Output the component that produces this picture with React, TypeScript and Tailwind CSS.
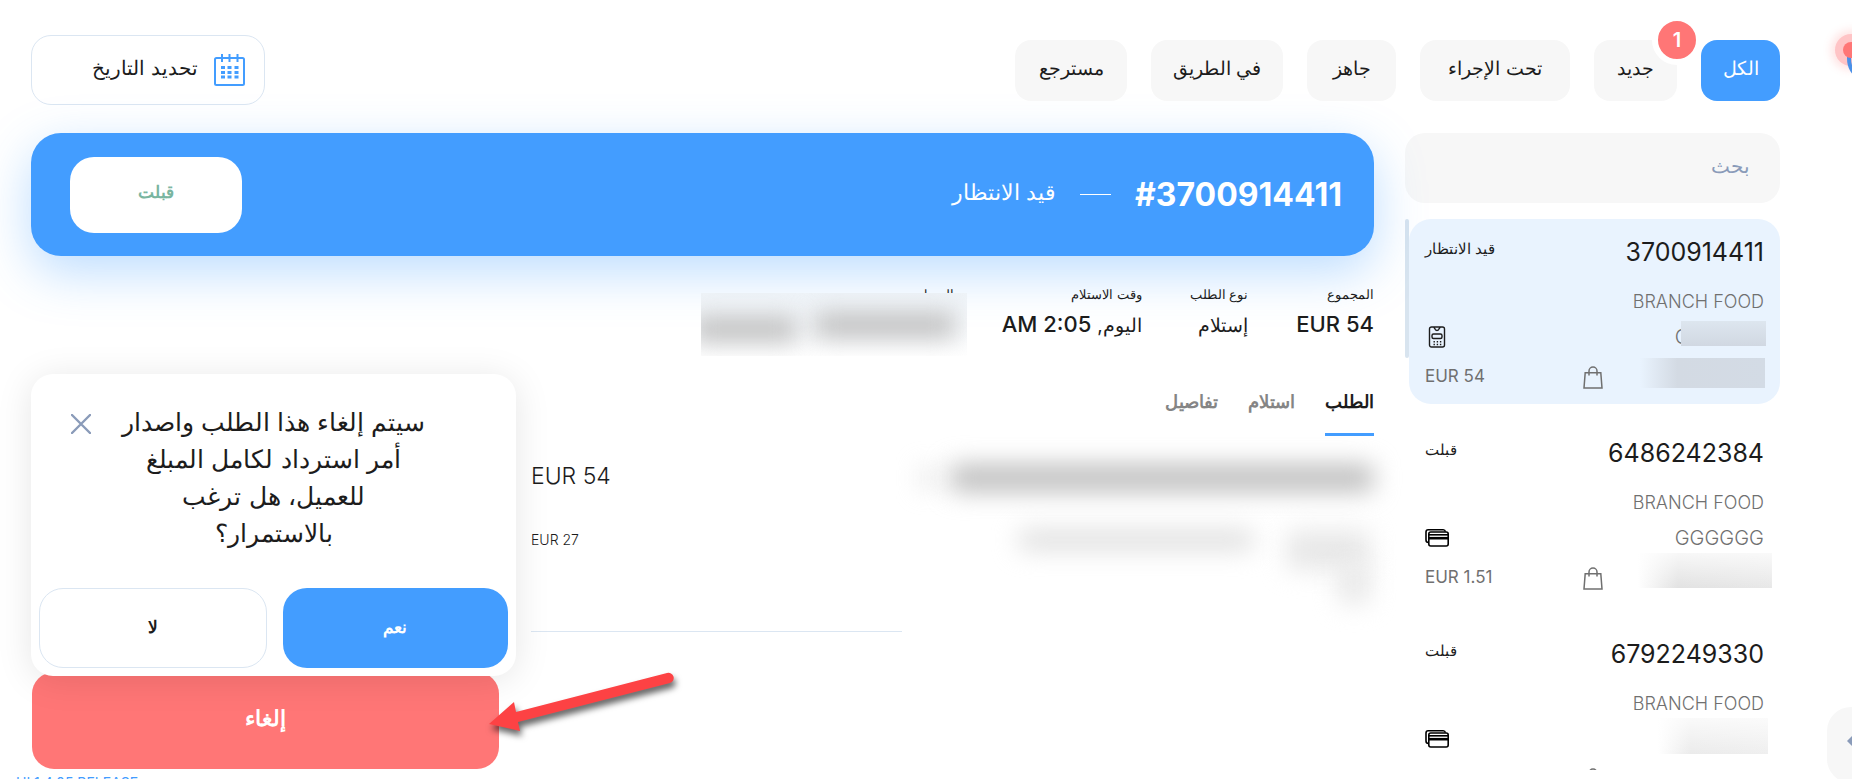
import { type ReactNode, useState } from "react";
import clsx from "clsx";

interface StatusTab {
  key: string;
  label: string;
  width: string;
  badge?: number;
}

interface Order {
  id: string;
  status: string;
  branch: string;
  customer?: string;
  total?: string;
  payment: "cash" | "card";
  masks: string[];
}

const statusTabs: StatusTab[] = [
  { key: "all", label: "الكل", width: "w-[79px]" },
  { key: "new", label: "جديد", width: "w-[83px]", badge: 1 },
  { key: "progress", label: "تحت الإجراء", width: "w-[150px]" },
  { key: "ready", label: "جاهز", width: "w-[89px]" },
  { key: "onway", label: "في الطريق", width: "w-[132px]" },
  { key: "returned", label: "مسترجع", width: "w-[112px]" },
];

const orders: Order[] = [
  {
    id: "3700914411",
    status: "قيد الانتظار",
    branch: "BRANCH FOOD",
    customer: "GGGGGG",
    total: "EUR 54",
    payment: "cash",
    masks: [
      "right-[14px] top-[102px] h-[25px] w-[85px] bg-linear-to-b from-[#dde6ef] to-[#d1d8e2]",
      "right-[15px] top-[139px] h-[30px] w-[125px] bg-linear-to-r from-[#e9f3fe] via-[#d3dae3] via-30% to-[#d3dbe5]",
    ],
  },
  {
    id: "6486242384",
    status: "قبلت",
    branch: "BRANCH FOOD",
    customer: "GGGGGG",
    total: "EUR 1.51",
    payment: "card",
    masks: [
      "right-2 top-[133px] h-[35px] w-[134px] bg-linear-to-r from-white via-[#e2e2e2] via-30% to-[#e8e8e8]",
      "right-2 top-[133px] h-[35px] w-[134px] bg-linear-to-b from-white/75 to-transparent",
    ],
  },
  {
    id: "6792249330",
    status: "قبلت",
    branch: "BRANCH FOOD",
    payment: "card",
    masks: [
      "right-3 top-[97px] h-9 w-[110px] bg-linear-to-r from-white via-[#ebebeb] via-30% to-[#efefef]",
      "right-3 top-[97px] h-9 w-[110px] bg-linear-to-b from-white/75 to-transparent",
    ],
  },
];

const detailTabs = ["الطلب", "استلام", "تفاصيل"];

function CalendarIcon() {
  return (
    <svg width="32" height="32" viewBox="0 0 32 32" fill="none" stroke="#439dff" strokeWidth="2">
      <rect x="1" y="4" width="29" height="27" rx="1.500" />
      <path d="M8 0v8M15.500 0v8M23.500 0v8" />
      <path d="M7 13.500h4M13.500 13.500h4M20.500 13.500h4M7 18.500h4M13.500 18.500h4M20.500 18.500h4M7 23h4M13.500 23h4M20.500 23h4" strokeWidth="3" />
    </svg>
  );
}

function TerminalIcon() {
  return (
    <svg width="18" height="22" viewBox="0 0 18 22" fill="none" stroke="#1c1c1c" strokeWidth="1.400">
      <rect x="1.500" y="1" width="15" height="20" rx="2" />
      <path d="M6 1c0 1 .8 1.200 1 2 .3 1.900 3.700 1.900 4 0 .2-.8 1-1 1-2" />
      <rect x="4" y="8" width="10" height="4.500" rx="1.500" />
      <path d="M5.500 15.800h8M5.500 18.500h8" strokeDasharray="1.400 1.800" />
    </svg>
  );
}

function CardsIcon() {
  return (
    <svg width="24" height="18" viewBox="0 0 24 18" fill="none" stroke="#000" strokeWidth="1.600">
      <path d="M3.500 13.500C1.800 13.500 1 12.600 1 11V3c0-1.400.8-2.200 2.200-2.200h15c1.200 0 2 .7 2.200 1.900" />
      <rect x="3.800" y="3" width="19.400" height="14" rx="2" fill="#fff" />
      <path d="M3.800 5.800h19.400" />
      <path d="M3.800 9.200h19.400" strokeWidth="2.600" />
    </svg>
  );
}

function BagIcon() {
  return (
    <svg width="20" height="23" viewBox="0 0 20 23" fill="none" stroke="#707070" strokeWidth="1.500">
      <path d="M2.200 6.800h15.600L19 22H1z" />
      <path d="M6 9.500V5a4 4 0 0 1 8 0v4.500" />
    </svg>
  );
}

function OrderCard({ order, active }: { order: Order; active: boolean }) {
  return (
    <li
      className={clsx(
        "relative shrink-0 rounded-[22px] px-4 pt-4 pb-[9px] text-[18px] font-light text-[#707070]",
        active && "bg-[#e9f3fe]",
      )}
    >
      <div className="flex h-9 items-center justify-between">
        <span className="text-[25px] font-normal text-[#1c1c1c]">{order.id}</span>
        <span className="pb-2 text-[15px] font-normal text-[#1c1c1c]">{order.status}</span>
      </div>
      <div className="mt-3 flex h-9 items-center">{order.branch}</div>
      <div className="flex h-9 items-center justify-between">
        <span className="text-[20px]">{order.customer}</span>
        <span className="flex w-6 justify-center">{order.payment === "cash" ? <TerminalIcon /> : <CardsIcon />}</span>
      </div>
      <div className="mt-1 flex h-9 items-center justify-end">
        <BagIcon />
        <span dir="ltr" className="w-[158px] text-[17px] font-normal">
          {order.total}
        </span>
      </div>
      {order.masks.map((mask) => (
        <div key={mask} className={clsx("absolute", mask)} />
      ))}
    </li>
  );
}

function Info({ label, children }: { label: string; children?: ReactNode }) {
  return (
    <div className="flex flex-col gap-1 whitespace-nowrap">
      <dt className="text-[13px] leading-5">{label}</dt>
      <dd className="text-[22px] leading-8 font-medium">{children}</dd>
    </div>
  );
}

function CancelDialog() {
  return (
    <div
      role="dialog"
      aria-label="إلغاء"
      className="absolute -left-px bottom-[93px] w-[485px] rounded-[22px] bg-white px-2 pt-[30px] pb-2 shadow-[0_4px_36px_rgba(0,0,0,0.1)]"
    >
      <button type="button" aria-label="إغلاق" className="absolute top-10 left-10">
        <svg width="20" height="20" viewBox="0 0 20 20" stroke="#8a9bb9" strokeWidth="2.400" strokeLinecap="round">
          <path d="M1 1l18 18M19 1L1 19" />
        </svg>
      </button>
      <p className="text-center text-[25px] leading-[37px]">
        سيتم إلغاء هذا الطلب واصدار
        <br />
        أمر استرداد لكامل المبلغ
        <br />
        للعميل، هل ترغب
        <br />
        بالاستمرار؟
      </p>
      <div className="mt-9 flex gap-4">
        <button type="button" className="h-20 flex-1 rounded-3xl bg-[#439dff] text-[17px] font-bold text-white">
          نعم
        </button>
        <button
          type="button"
          className="h-20 flex-1 rounded-3xl border border-[#dbe6f2] bg-white text-[17px] font-bold"
        >
          لا
        </button>
      </div>
    </div>
  );
}

function Pointer() {
  return (
    <svg
      className="pointer-events-none absolute -right-[176px] bottom-[30px] drop-shadow-[2px_5px_3px_rgba(0,0,0,0.6)]"
      width="186"
      height="68"
      viewBox="0 0 186 68"
    >
      <path d="M0 53 25 31l2 10L178 2a5 5 0 0 1 3 10L29 51l2 9z" fill="#fd4244" />
    </svg>
  );
}

export default function App() {
  const [status, setStatus] = useState("all");
  const [tab, setTab] = useState(detailTabs[0]);

  return (
    <div
      dir="rtl"
      className="relative flex h-screen flex-col overflow-hidden bg-white font-[Inter,'Liberation_Sans',sans-serif] text-[#1c1c1c]"
    >
      <header className="flex h-[133px] shrink-0 items-start justify-between pt-[35px] pr-[72px] pl-[31px]">
        <nav className="mt-[5px] flex gap-6">
          {statusTabs.map((item) => (
            <button
              key={item.key}
              type="button"
              onClick={() => setStatus(item.key)}
              className={clsx(
                "relative h-[61px] rounded-2xl pb-0.5 text-[19px] whitespace-nowrap",
                item.width,
                status === item.key ? "bg-[#439dff] text-white" : "bg-[#f7f7f7]",
              )}
            >
              {item.label}
              {item.badge && (
                <span className="absolute -top-[25px] -right-[25px] flex size-[50px] items-center justify-center rounded-full border-6 border-white bg-[#ff7676] text-[20px] font-semibold text-white">
                  {item.badge}
                </span>
              )}
            </button>
          ))}
        </nav>
        <button
          type="button"
          className="flex h-[70px] w-[234px] items-center gap-4 rounded-[20px] border border-[#dbe6f2] pr-[18px] text-[20px]"
        >
          <CalendarIcon />
          <span className="pb-1">تحديد التاريخ</span>
        </button>
      </header>

      <div className="flex min-h-0 flex-1 gap-[31px] pr-[72px] pl-[31px]">
        <aside className="flex w-[375px] shrink-0 flex-col">
          <input
            type="search"
            aria-label="بحث"
            placeholder="بحث"
            className="h-[70px] shrink-0 rounded-[20px] bg-[#f7f7f7] px-[30px] pb-1 text-[20px] outline-none placeholder:text-[#8a9bb9]"
          />
          <div className="mt-4 flex min-h-0 flex-1">
            <ul className="flex flex-1 flex-col gap-4 overflow-hidden">
              {orders.map((order, index) => (
                <OrderCard key={order.id} order={order} active={index === 0} />
              ))}
            </ul>
            <div className="h-[139px] w-1 rounded-full bg-[#d8e4ef]" />
          </div>
        </aside>

        <main className="flex min-w-0 flex-1 flex-col">
          <div className="flex h-[123px] shrink-0 items-center justify-between rounded-[30px] bg-[#439dff] pr-8 pl-[39px] text-white shadow-[0_16px_50px_rgba(67,157,255,0.35)]">
            <div className="flex items-center gap-6">
              <h1 dir="ltr" className="text-[32px] font-bold">
                #3700914411
              </h1>
              <span className="h-px w-[31px] bg-white" />
              <span className="pb-1 text-[22px]">قيد الانتظار</span>
            </div>
            <button
              type="button"
              className="h-[76px] w-[172px] rounded-3xl bg-white pb-1 text-[17px] font-bold text-[#79b5a0]"
            >
              قبلت
            </button>
          </div>

          <dl className="relative mt-7 flex gap-12">
            <Info label="المجموع">EUR 54</Info>
            <Info label="نوع الطلب">
              <span className="text-[19px] font-normal">إستلام</span>
            </Info>
            <Info label="وقت الاستلام">
              <span className="text-[19px] font-normal">اليوم,</span> 2:05 AM
            </Info>
            <Info label="العميل" />
            <div className="absolute top-[9px] right-[407px] h-[63px] w-[266px] overflow-hidden bg-linear-to-b from-[#eef3f8] to-white">
              <div className="absolute top-5 right-3 h-6 w-[140px] bg-[#bcbcbc] blur-md" />
              <div className="absolute top-6 -left-2 h-6 w-[104px] bg-[#bcbcbc] blur-md" />
            </div>
          </dl>

          <nav className="mt-[43px] flex gap-[30px] text-[18px] font-bold">
            {detailTabs.map((label) => (
              <button
                key={label}
                type="button"
                onClick={() => setTab(label)}
                className={clsx(
                  "h-[51px] border-b-3 pb-4",
                  tab === label ? "border-[#439dff]" : "border-transparent text-[#858585]",
                )}
              >
                {label}
              </button>
            ))}
          </nav>

          <section className="mt-5 flex h-44 shrink-0">
            <div className="relative w-[472px]">
              <div className="absolute top-2 right-0 h-7 w-[424px] rounded-lg bg-[#c0c0c0] blur-md" />
              <div className="absolute top-3 right-[440px] h-5 w-3 bg-[#dcdcdc] blur-md" />
              <div className="absolute top-[74px] right-[120px] h-5 w-[236px] rounded-lg bg-[#dedede] blur-md" />
              <div className="absolute top-[74px] right-1 h-10 w-[84px] rounded-lg bg-[#e8e8e8] blur-md" />
              <div className="absolute top-[108px] right-1 h-10 w-8 rounded-lg bg-[#e8e8e8] blur-md" />
            </div>
            <div dir="ltr" className="ml-[500px] flex flex-1 flex-col border-b border-[#dbe6f2] font-light">
              <span className="text-[23px] leading-10">EUR 54</span>
              <span className="mt-7 text-[14px] leading-8">EUR 27</span>
            </div>
          </section>

          <footer className="relative mt-auto mr-auto mb-px ml-px w-[467px]">
            <button
              type="button"
              className="h-[97px] w-full rounded-[22px] bg-[#ff7676] pb-1 text-[22px] font-bold text-white"
            >
              إلغاء
            </button>
            <CancelDialog />
            <Pointer />
          </footer>
        </main>
      </div>

      <p dir="ltr" className="h-[9px] shrink-0 pt-[3px] pl-4 text-[14px] leading-5 text-[#439dff]">
        UI 1.4.05 RELEASE
      </p>

      <svg className="absolute top-[20px] right-0" width="52" height="64" viewBox="0 0 52 64" fill="none">
        <circle cx="51" cy="30" r="20" fill="#ff7676" className="opacity-20 blur-xs" />
        <circle cx="51" cy="30" r="16" fill="#ffc4c6" />
        <ellipse cx="59" cy="38" rx="10" ry="17" stroke="#4a90e8" strokeWidth="4" />
        <circle cx="51" cy="30" r="8" fill="#ff7676" />
      </svg>
      <button
        type="button"
        aria-label="القائمة"
        className="absolute top-[707px] -right-12 h-[76px] w-[73px] rounded-3xl bg-[#f7f7f7]"
      >
        <svg className="absolute top-7 left-5" width="12" height="12" viewBox="0 0 12 12" fill="#8a9bb9">
          <path d="M0 6 6 0v12z" />
        </svg>
      </button>
    </div>
  );
}
